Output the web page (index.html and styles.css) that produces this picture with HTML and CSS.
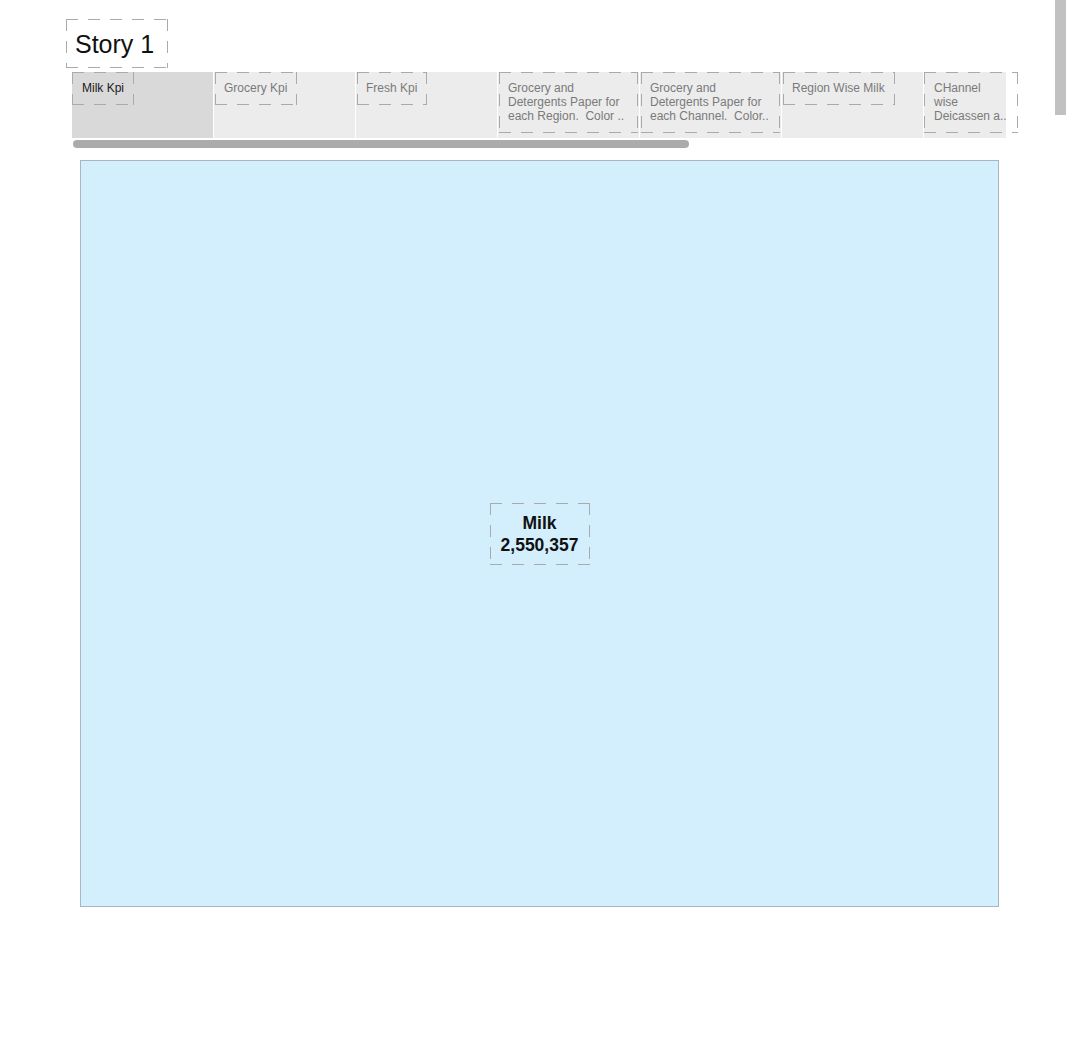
FILE: index.html
```html
<!DOCTYPE html>
<html>
<head>
<meta charset="utf-8">
<link rel="stylesheet" href="styles.css">
</head>
<body>
<div class="page">
  <div class="story-title dash">Story 1</div>
  <div class="tabs">
    <div class="tab active"><div class="cap dash first">Milk Kpi</div></div>
    <div class="tab"><div class="cap dash">Grocery Kpi</div></div>
    <div class="tab"><div class="cap dash">Fresh Kpi</div></div>
    <div class="tab"><div class="cap dash wide">Grocery and<br>Detergents Paper for<br>each Region.&nbsp; Color ..</div></div>
    <div class="tab"><div class="cap dash wide">Grocery and<br>Detergents Paper for<br>each Channel.&nbsp; Color..</div></div>
    <div class="tab"><div class="cap dash">Region Wise Milk</div></div>
    <div class="tab last"><div class="cap dash first over">CHannel<br>wise<br>Deicassen a..</div></div>
  </div>
  <div class="hscroll"></div>
  <div class="viz">
    <div class="kpi dash">Milk<br>2,550,357</div>
  </div>
</div>
<div class="vscroll"></div>
</body>
</html>
```
FILE: styles.css
```css
html, body {
  margin: 0;
  padding: 0;
  background: #ffffff;
  font-family: "Liberation Sans", Arial, sans-serif;
}
.page {
  padding-left: 66px;
  padding-top: 19px;
  width: 1000px;
}
.dash {
  background-image:
    repeating-linear-gradient(90deg, #aaaaaa 0 12px, transparent 12px 22px),
    repeating-linear-gradient(90deg, #aaaaaa 0 12px, transparent 12px 22px),
    repeating-linear-gradient(180deg, #aaaaaa 0 12px, transparent 12px 22px),
    repeating-linear-gradient(180deg, #aaaaaa 0 12px, transparent 12px 22px);
  background-size: 100% 1px, 100% 1px, 1px 100%, 1px 100%;
  background-position: left top, left bottom, left top, right top;
  background-repeat: no-repeat;
}
.story-title {
  display: inline-block;
  box-sizing: border-box;
  height: 49px;
  line-height: 50px;
  padding: 0 14px 0 9px;
  font-size: 25px;
  color: #111111;
}
.tabs {
  display: flex;
  gap: 1px;
  margin-left: 6px;
  margin-top: 4px;
  height: 66px;
}
.tab {
  width: 141px;
  flex: none;
  background: #ececec;
}
.tab.active {
  background: #d9d9d9;
}
.tab.last {
  width: 82px;
}
.cap {
  display: inline-block;
  margin-left: 1px;
  padding: 9px 10px 10px 9px;
  font-size: 12px;
  line-height: 14px;
  color: #7a7a7a;
  white-space: nowrap;
}
.cap.first {
  margin-left: 0;
  padding-left: 10px;
}
.tab.active .cap {
  color: #1a1a1a;
}
.cap.wide {
  box-sizing: border-box;
  width: 139px;
}
.cap.over {
  width: 74px;
}
.hscroll {
  margin-left: 7px;
  margin-top: 2px;
  width: 616px;
  height: 8px;
  border-radius: 4px;
  background: #ababab;
}
.viz {
  margin-left: 14px;
  margin-top: 12px;
  width: 917px;
  height: 745px;
  background: #d3eefd;
  border: 1px solid #a9b6c1;
  display: flex;
  align-items: center;
  justify-content: center;
}
.kpi {
  box-sizing: border-box;
  width: 100px;
  height: 62px;
  padding-top: 9px;
  font-size: 17.5px;
  line-height: 22px;
  font-weight: bold;
  text-align: center;
  color: #111111;
}
.vscroll {
  position: fixed;
  top: 0;
  right: 14px;
  width: 11px;
  height: 115px;
  background: #c1c1c1;
}
```
